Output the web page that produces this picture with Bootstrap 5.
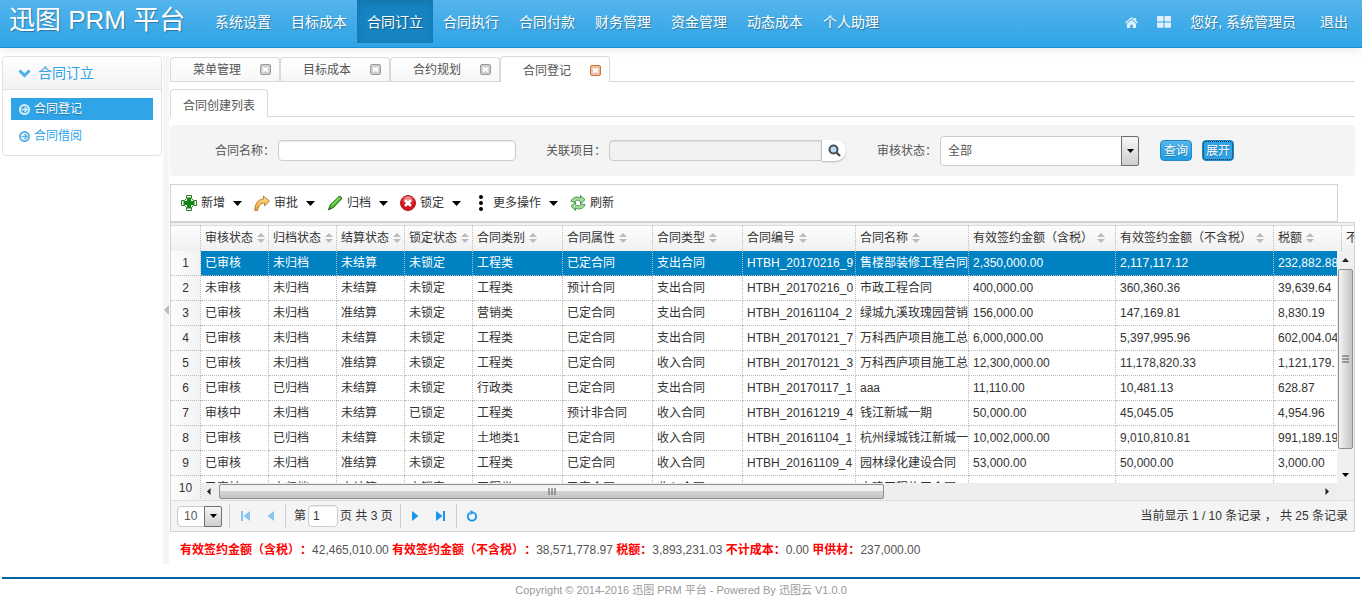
<!DOCTYPE html>
<html lang="zh-CN">
<head>
<meta charset="utf-8">
<meta name="viewport" content="width=device-width, initial-scale=1">
<title>迅图 PRM 平台</title>
<link href="https://cdn.jsdelivr.net/npm/bootstrap@5.3.0/dist/css/bootstrap.min.css" rel="stylesheet">
<style>
body{font-family:"Liberation Sans","Noto Sans CJK SC",sans-serif;font-size:12px;line-height:18px;color:#555;background:#fff;overflow-x:hidden;text-spacing-trim:space-all}
a{text-decoration:none;color:inherit}
svg{display:block;flex:none}
.topbar{height:48px;background:linear-gradient(#54b4eb,#2fa4e7);border-bottom:1px solid #1a8cd0;box-shadow:0 1px 10px rgba(0,0,0,.1);color:#fff;text-shadow:1px 1px 1px rgba(0,0,0,.3);padding:0 14px 0 9px}
.brand-name{font-size:26px;line-height:40px;width:196px}
.topbar .nav-link{font-size:14px;line-height:44px;height:43px;padding:0 10px;color:#fff}
.topbar .nav-link.active{background:#1684c2;box-shadow:inset 0 3px 8px rgba(0,0,0,.125)}
.tools{font-size:14px;line-height:44px;height:44px}
.tools .apps{margin:0 19px}
.side{width:160px;margin:8px 1px 0 2px}
.side-box{border:1px solid #e3e3e3;border-radius:4px}
.side-title{height:33px;background:linear-gradient(#fff,#f2f2f2);border-bottom:1px solid #e3e3e3;color:#2fa4e7;font-size:14px;border-radius:4px 4px 0 0;padding-left:15px;gap:7px}
.side-list{padding:8px 0 8px;gap:5px}
.side-item{height:22px;margin:0 8px;padding-left:8px;color:#2fa4e7;gap:4px}
.side-item.active{background:#2fa4e7;color:#fff;text-shadow:0 1px 1px rgba(0,0,0,.3)}
.side-item .ring{fill:none;stroke:#5cb3e6}
.side-item.active .ring{stroke:#d8edf9}
.splitter{width:6px;background:#f5f5f5;margin-top:8px}
.content-area{min-width:0;padding:8px 7px 5px 1px}
.tabstrip{height:26px;border-bottom:1px solid #d9d9d9}
.tab-item{width:110px;height:24px;border:1px solid #d9d9d9;border-bottom:0;border-radius:4px 4px 0 0;background:linear-gradient(#fff,#f7f7f7);padding:0 8px 0 22px}
.tab-item.active{height:26px;margin-bottom:-1px;padding-top:2px;background:#fff}
.closer{border:0;background:none;padding:0;color:#999}
.active .closer{color:#d0733a}
.subtabs{height:35px;border-bottom:1px solid #d9d9d9}
.subtab{height:28px;padding:7px 12px 0;border:1px solid #d9d9d9;border-bottom:0;border-radius:4px 4px 0 0;background:#fff;margin-bottom:-1px}
.filters{height:51px;margin-top:8px;background:#f4f4f4;border-radius:4px;padding-left:45px}
.tbox{border:1px solid #ccc;border-radius:4px;background:#fff;color:#555;outline:0;height:21px;padding:0 7px;box-shadow:inset 0 1px 1px rgba(0,0,0,.08)}
.fieldset-row{gap:3px}
.namebox{width:238px}
.refbox{width:213px;background:#f2f2f2;border-radius:4px 0 0 4px}
.lookup{width:24px;height:21px;border:0;background:#fff;border-radius:0 11px 11px 0;box-shadow:0 1px 2px rgba(0,0,0,.25);padding:0 0 0 6px}
.picker{position:relative}
.picker select{width:100%;height:100%;border:1px solid #ccc;border-radius:4px;background:#fff;color:#555;padding:0 7px;appearance:none}
.picker .arrow{position:absolute;right:0;top:0;bottom:0;width:18px;background:linear-gradient(#f6f6f6,#cfcfcf);border:1px solid #707070;border-radius:0 2px 2px 0;pointer-events:none}
.statuspick{width:199px;height:30px}
.sizepick{width:45px;height:21px}
.sizepick select{padding:0 6px}
.go{height:21px;width:32px;border:1px solid #1f87c8;border-radius:4px;background:linear-gradient(#54b4eb,#1d9ce5);color:#fff;line-height:18px;padding:0;text-shadow:0 1px 1px rgba(0,0,0,.3)}
.go.focused{outline:1px dotted #123;outline-offset:-2px;background:#2fa4e7}
.toolbar{height:38px;border:1px solid #d3d3d3;margin:8px 17px 0 0;padding-left:10px;gap:12px}
.tool{border:0;background:none;padding:0;color:#333;gap:4px}
.tool .drop{margin-left:4px}
.gridframe{border:1px solid #d3d3d3;background:#f4f4f4;color:#333}
.gridview{position:relative;height:277px;overflow:hidden;background:#fff;border-top:2px solid #f1f1f1}
.gridview table{table-layout:fixed;border-collapse:separate;border-spacing:0;flex:none}
.gridview th{font-weight:400;height:26px;padding:0 0 2px 4px;border-top:1px solid #dcdcdc;border-right:1px dotted #bbb;background:linear-gradient(#fefefe,#f0f0f0);white-space:nowrap;overflow:hidden}
.gridview td{height:25px;padding:0 0 0 4px;border-bottom:1px dotted #bbb;border-right:1px dotted #bbb;white-space:nowrap;overflow:hidden}
.gridview .rowno{width:30px}
.rowno td{background:linear-gradient(90deg,#fdfdfd,#f2f2f2);text-align:center;padding:0}
.records{width:1260px}
.records tr.selected td{background:#0081c2;color:#fff}
.sorter{display:inline-block;vertical-align:-1px;margin-left:4px}
.vbar{position:absolute;right:0;top:26px;bottom:0;width:17px;background:#f0f0f0;padding:7px 1px 23px;gap:7px}
.vthumb{height:180px;width:15px;border:1px solid #8f8f8f;border-radius:2px;background:linear-gradient(90deg,#f4f4f4,#c4c4c8)}
.hbar{position:absolute;left:30px;right:0;bottom:0;height:17px;background:#eee;padding:0 24px 0 5px}
.hthumb{margin-left:8px;width:665px;height:15px;border:1px solid #8f8f8f;border-radius:2px;background:linear-gradient(#f2f2f2 45%,#d4d4d6 50%,#c4c4c8)}
.pager{height:31px;border-top:1px solid #ddd;padding:0 6px}
.vsep{width:1px;height:24px;background:#ccc;margin-left:7px}
.pager button{border:0;background:none;padding:0}
.steps{padding:0 4px 0 11px;gap:17px}
.pageno{width:30px;height:22px;padding:0 4px;margin:0 2px;color:#333}
.totals{margin:9px 0 0 10px}
.totals b{color:#f00}
.foot{border-top:2px solid #0062a0;margin:13px 2px 0 2px;padding-top:2px;text-align:center;color:#999;font-size:11px}
</style>
</head>
<body>
<svg width="0" height="0" class="position-absolute" aria-hidden="true">
  <defs>
    <symbol id="caret" viewBox="0 0 9 5"><path d="M0 0h9L4.500 5z"/></symbol>
    <symbol id="smallcaret" viewBox="0 0 7 4"><path d="M0 0h7L3.500 4z"/></symbol>
    <symbol id="sort" viewBox="0 0 8 10"><path d="M0 4 4 0l4 4zM0 6h8l-4 4z" fill="#bbb"/></symbol>
    <symbol id="close" viewBox="0 0 11 11"><rect x=".5" y=".5" width="10" height="10" rx="1.500" fill="currentColor" fill-opacity=".45" stroke="currentColor"/><path d="m3 3.500 5 4M8 3.500l-5 4" stroke="#fff" stroke-width="2"/></symbol>
    <symbol id="circlearrow" viewBox="0 0 11 11"><circle cx="5.500" cy="5.500" r="4.500" stroke-width="2"/><path d="M2.500 5.500h5M5.500 3 8 5.500 5.500 8" stroke-width="1.500"/></symbol>
    <linearGradient id="gold" x2="0" y2="1"><stop stop-color="#ffe28a"/><stop offset="1" stop-color="#f3a02c"/></linearGradient>
    <radialGradient id="red" cy=".2"><stop stop-color="#f59a95"/><stop offset="1" stop-color="#d0141a"/></radialGradient>
  </defs>
</svg>
<header class="topbar d-flex align-items-start">
  <a class="brand-name text-nowrap" href="#">迅图 PRM 平台</a>
  <nav class="nav flex-nowrap text-nowrap">
    <a class="nav-link" href="#">系统设置</a><a class="nav-link" href="#">目标成本</a><a class="nav-link active" href="#">合同订立</a><a class="nav-link" href="#">合同执行</a><a class="nav-link" href="#">合同付款</a><a class="nav-link" href="#">财务管理</a><a class="nav-link" href="#">资金管理</a><a class="nav-link" href="#">动态成本</a><a class="nav-link" href="#">个人助理</a>
  </nav>
  <div class="tools ms-auto d-flex align-items-center text-nowrap">
    <a href="#" aria-label="首页"><svg width="13" height="11" viewBox="0 0 14 12" fill="#dff0fb"><path d="M7 0 0 6l1 1 6-5 6 5 1-1-2-2V1h-2v1.500zM7 3.200 2 7.400V12h3.600V8.500h2.800V12H12V7.400z"/></svg></a>
    <a class="apps" href="#" aria-label="应用"><svg width="14" height="12" viewBox="0 0 14 12" fill="#dff0fb"><rect width="6.500" height="5.400" rx=".8"/><rect x="7.500" width="6.500" height="5.400" rx=".8"/><rect y="6.400" width="6.500" height="5.400" rx=".8"/><rect x="7.500" y="6.400" width="6.500" height="5.400" rx=".8"/></svg></a>
    <a href="#">您好, 系统管理员</a><a href="#" class="ms-4">退出</a>
  </div>
</header>
<div class="d-flex">
  <aside class="side flex-shrink-0">
    <div class="side-box">
      <div class="side-title d-flex align-items-center"><svg width="13" height="9" viewBox="0 0 13 9"><path d="m1.500 1.500 5 5 5-5" fill="none" stroke="#4aaee8" stroke-width="3"/></svg>合同订立</div>
      <div class="side-list d-grid">
        <a class="side-item active d-flex align-items-center" href="#"><svg class="ring" width="11" height="11"><use href="#circlearrow"/></svg>合同登记</a>
        <a class="side-item d-flex align-items-center" href="#"><svg class="ring" width="11" height="11"><use href="#circlearrow"/></svg>合同借阅</a>
      </div>
    </div>
  </aside>
  <div class="splitter flex-shrink-0 d-flex align-items-center"><svg width="6" height="10" viewBox="0 0 6 10"><path d="M6 0v10L1 5z" fill="#bbb"/></svg></div>
  <main class="content-area flex-grow-1">
    <div class="tabstrip d-flex align-items-end">
      <div class="tab-item d-flex align-items-center justify-content-between"><a href="#">菜单管理</a><button class="closer" aria-label="关闭"><svg width="11" height="11"><use href="#close"/></svg></button></div>
      <div class="tab-item d-flex align-items-center justify-content-between"><a href="#">目标成本</a><button class="closer" aria-label="关闭"><svg width="11" height="11"><use href="#close"/></svg></button></div>
      <div class="tab-item d-flex align-items-center justify-content-between"><a href="#">合约规划</a><button class="closer" aria-label="关闭"><svg width="11" height="11"><use href="#close"/></svg></button></div>
      <div class="tab-item active d-flex align-items-center justify-content-between"><a href="#">合同登记</a><button class="closer" aria-label="关闭"><svg width="11" height="11"><use href="#close"/></svg></button></div>
    </div>
    <div class="subtabs d-flex align-items-end"><a class="subtab" href="#">合同创建列表</a></div>

    <form class="filters d-flex align-items-center text-nowrap">
      <div class="fieldset-row d-flex align-items-center"><label for="cname">合同名称：</label><input id="cname" class="tbox namebox" type="text"></div>
      <div class="fieldset-row d-flex align-items-center" style="margin-left:30px"><label for="cproj">关联项目：</label><div class="d-flex"><input id="cproj" class="tbox refbox" type="text" readonly><button type="button" class="lookup" aria-label="查找"><svg width="13" height="13" viewBox="0 0 13 13"><circle cx="5.500" cy="5.500" r="4" fill="#b9dcf3" stroke="#4a4f55" stroke-width="2"/><path d="m8.500 8.500 3.500 3.500" stroke="#4a4f55" stroke-width="2.400"/></svg></button></div></div>
      <div class="fieldset-row d-flex align-items-center" style="margin-left:31px"><label for="cstate">审核状态：</label><div class="picker statuspick"><select id="cstate"><option>全部</option><option>已审核</option><option>未审核</option></select><span class="arrow d-flex align-items-center justify-content-center"><svg width="7" height="4"><use href="#smallcaret"/></svg></span></div></div>
      <div class="d-flex" style="margin-left:21px;gap:10px"><button type="button" class="go">查询</button><button type="button" class="go focused">展开</button></div>
    </form>

    <div class="toolbar d-flex align-items-center text-nowrap">
      <button class="tool d-flex align-items-center"><svg width="16" height="16" viewBox="0 0 16 16"><path d="M5.500.5h5v3l2 2h3v5h-3l-2 2v3h-5v-3l-2-2h-3v-5h3l2-2z" fill="#fff" stroke="#2f7a2f"/><path d="M6 2.500h4V6h3.500v4H10v3.500H6V10H2.500V6H6z" fill="#0e8a12"/></svg>新增<svg class="drop" width="9" height="5"><use href="#caret"/></svg></button>
      <button class="tool d-flex align-items-center"><svg width="16" height="16" viewBox="0 0 16 16"><path d="M9.500 1 15.500 6 10.500 11V8C6.500 8 5 10 3.500 15.500H.8C1 8.500 4 4.500 9.500 4z" fill="url(#gold)" stroke="#a27a3c" stroke-width=".9"/></svg>审批<svg class="drop" width="9" height="5"><use href="#caret"/></svg></button>
      <button class="tool d-flex align-items-center"><svg width="16" height="16" viewBox="0 0 16 16"><path d="M12 1.500c1.500-.7 3.200.9 2.500 2.500L6.500 12.500l-5 2.300 1.800-5z" fill="#4fb933" stroke="#26761b"/><path d="m5 10.500 7.500-7.800" stroke="#b9eb9d"/><path d="m1.500 14.800.8-2.300 1.500 1.300z" fill="#333"/></svg>归档<svg class="drop" width="9" height="5"><use href="#caret"/></svg></button>
      <button class="tool d-flex align-items-center"><svg width="16" height="16" viewBox="0 0 16 16"><circle cx="8" cy="8" r="7.500" fill="url(#red)" stroke="#b5181c"/><path d="m5 5 6 6m0-6-6 6" stroke="#fff" stroke-width="2.600"/></svg>锁定<svg class="drop" width="9" height="5"><use href="#caret"/></svg></button>
      <button class="tool d-flex align-items-center"><svg width="16" height="16" viewBox="0 0 16 16"><circle cx="8" cy="2" r="2"/><circle cx="8" cy="8" r="2"/><circle cx="8" cy="14" r="2"/></svg>更多操作<svg class="drop" width="9" height="5"><use href="#caret"/></svg></button>
      <button class="tool d-flex align-items-center"><svg width="16" height="16" viewBox="0 0 16 16" stroke="#3d8a48" stroke-width=".9" fill="#9fdc9a"><path d="M1 6.500C2 2.500 7 .8 10.500 3V.5L15 4.800 10.500 9V6.500C7.500 4.500 6 5 5 7z"/><path d="M15 9.500c-1 4-6 5.700-9.500 3.500v2.500L1 11.200 5.500 7v2.500C8.500 11.500 10 11 11 9z"/></svg>刷新</button>
    </div>

    <div class="gridframe">
      <div class="gridview d-flex">
        <table class="rowno"><thead><tr><th></th></tr></thead><tbody id="numbers"></tbody></table>
        <table class="records">
          <colgroup id="cols"></colgroup>
          <thead><tr id="heads"></tr></thead>
          <tbody id="rows"></tbody>
        </table>
        <div class="hbar d-flex align-items-center"><svg width="5" height="7" viewBox="0 0 5 7"><path d="M4.500 0v7L1 3.500z" fill="#222"/></svg><span class="hthumb d-flex align-items-center justify-content-center"><svg width="8" height="7"><path d="M1 0v7M4 0v7M7 0v7" stroke="#555"/></svg></span><svg class="ms-auto" width="5" height="7" viewBox="0 0 5 7"><path d="M.5 0v7L4 3.500z" fill="#222"/></svg></div>
        <div class="vbar d-flex flex-column align-items-center"><svg width="7" height="4" viewBox="0 0 7 4"><path d="M0 4h7L3.500 0z" fill="#222"/></svg><span class="vthumb d-flex align-items-center justify-content-center"><svg width="7" height="8"><path d="M0 1h7M0 4h7M0 7h7" stroke="#555"/></svg></span><svg class="mt-auto" width="7" height="4"><use href="#smallcaret"/></svg></div>
      </div>
      <div class="pager d-flex align-items-center text-nowrap">
        <div class="picker sizepick"><select aria-label="每页条数"><option>10</option><option>20</option></select><span class="arrow d-flex align-items-center justify-content-center"><svg width="7" height="4"><use href="#smallcaret"/></svg></span></div>
        <span class="vsep"></span>
        <div class="steps d-flex">
          <button aria-label="首页"><svg width="9" height="10" viewBox="0 0 9 10" fill="#86c5ef"><path d="M0 0h2v10H0zM9 0v10L2.500 5z"/></svg></button>
          <button aria-label="上一页"><svg width="7" height="10" viewBox="0 0 7 10" fill="#86c5ef"><path d="M7 0v10L.5 5z"/></svg></button>
        </div>
        <span class="vsep me-2"></span>
        <label for="pageno">第</label><input id="pageno" class="tbox pageno" type="text" value="1"><span>页 共 3 页</span>
        <span class="vsep"></span>
        <div class="steps d-flex">
          <button aria-label="下一页"><svg width="7" height="10" viewBox="0 0 7 10" fill="#1a96ea"><path d="M0 0v10l6.500-5z"/></svg></button>
          <button aria-label="末页"><svg width="9" height="10" viewBox="0 0 9 10" fill="#1a96ea"><path d="M7 0h2v10H7zM0 0v10l6.500-5z"/></svg></button>
        </div>
        <span class="vsep"></span>
        <button aria-label="刷新" style="margin-left:9px"><svg width="12" height="12" viewBox="0 0 12 12" fill="none" stroke="#1a96ea" stroke-width="1.800"><path d="M8 2.800A4.200 4.200 0 1 1 4 2.800"/><path d="M4.500 0v5L8.500 2.500z" fill="#1a96ea" stroke="none"/></svg></button>
        <span class="ms-auto">当前显示 1 / 10 条记录 ， 共 25 条记录</span>
      </div>
    </div>
    <div class="totals text-nowrap"><b>有效签约金额（含税）</b><b>：</b>42,465,010.00 <b>有效签约金额（不含税）</b><b>：</b>38,571,778.97 <b>税额：</b>3,893,231.03 <b>不计成本：</b>0.00 <b>甲供材：</b>237,000.00</div>
  </main>
</div>
<footer class="foot">Copyright © 2014-2016 迅图 PRM 平台 - Powered By 迅图云 V1.0.0</footer>
<script src="https://cdn.jsdelivr.net/npm/bootstrap@5.3.0/dist/js/bootstrap.bundle.min.js"></script>
<script>
const columns = [['审核状态',68],['归档状态',68],['结算状态',68],['锁定状态',68],['合同类别',90],['合同属性',90],['合同类型',90],['合同编号',113],['合同名称',113],['有效签约金额（含税）',147],['有效签约金额（不含税）',158],['税额',68],['不',119]];
const records = `已审核|未归档|未结算|未锁定|工程类|已定合同|支出合同|HTBH_20170216_9|售楼部装修工程合同|2,350,000.00|2,117,117.12|232,882.88
未审核|未归档|未结算|未锁定|工程类|预计合同|支出合同|HTBH_20170216_0|市政工程合同|400,000.00|360,360.36|39,639.64
已审核|未归档|准结算|未锁定|营销类|已定合同|支出合同|HTBH_20161104_2|绿城九溪玫瑰园营销|156,000.00|147,169.81|8,830.19
已审核|未归档|未结算|未锁定|工程类|已定合同|支出合同|HTBH_20170121_7|万科西庐项目施工总|6,000,000.00|5,397,995.96|602,004.04
已审核|未归档|准结算|未锁定|工程类|已定合同|收入合同|HTBH_20170121_3|万科西庐项目施工总|12,300,000.00|11,178,820.33|1,121,179.
已审核|已归档|未结算|未锁定|行政类|已定合同|支出合同|HTBH_20170117_1|aaa|11,110.00|10,481.13|628.87
审核中|未归档|未结算|已锁定|工程类|预计非合同|收入合同|HTBH_20161219_4|钱江新城一期|50,000.00|45,045.05|4,954.96
已审核|已归档|未结算|未锁定|土地类1|已定合同|收入合同|HTBH_20161104_1|杭州绿城钱江新城一|10,002,000.00|9,010,810.81|991,189.19
已审核|未归档|准结算|未锁定|工程类|已定合同|收入合同|HTBH_20161109_4|园林绿化建设合同|53,000.00|50,000.00|3,000.00
已审核|未归档|未结算|未锁定|工程类|已定合同|收入合同||土建工程施工合同|||`.split('\n').map(r => r.split('|'));
const $ = id => document.getElementById(id);
$('cols').innerHTML = columns.map(c => `<col style="width:${c[1]}px">`).join('');
$('heads').innerHTML = columns.map(c => `<th>${c[0]}<svg class="sorter" width="8" height="10"><use href="#sort"/></svg></th>`).join('');
$('numbers').innerHTML = records.map((r, i) => `<tr><td>${i + 1}</td></tr>`).join('');
$('rows').innerHTML = records.map((r, i) => `<tr${i ? '' : ' class="selected"'}>${columns.map((c, k) => `<td>${r[k] || ''}</td>`).join('')}</tr>`).join('');
</script>
</body>
</html>
